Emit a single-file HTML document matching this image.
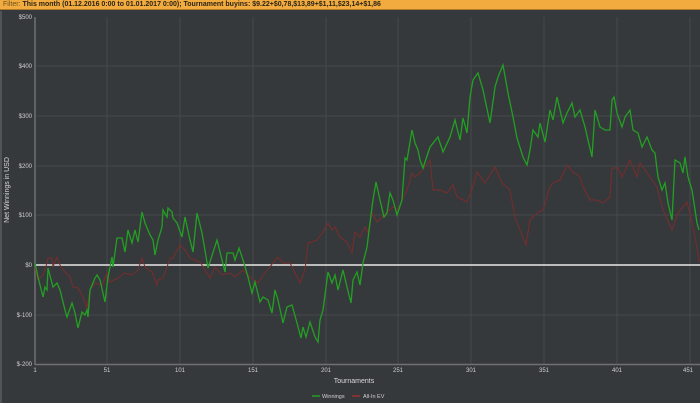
<!DOCTYPE html>
<html><head><style>
html,body{margin:0;padding:0;width:700px;height:403px;overflow:hidden;background:#36393c;font-family:"Liberation Sans",sans-serif}
#hdr{position:absolute;left:0;top:0;width:700px;height:10px;background:#f2ab3f;border-bottom:1px solid #b07a2a;font-size:7px;font-weight:bold;line-height:10px;color:#2a2418;padding-left:3px;box-sizing:border-box;white-space:nowrap}
#hdr span{color:#6a5020;font-weight:normal}
</style></head><body>
<div id="hdr"><span>Filter:</span> This month (01.12.2016 0:00 to 01.01.2017 0:00); Tournament buyins: $9.22+$0,78,$13,89+$1,11,$23,14+$1,86</div>
<svg width="700" height="403" style="position:absolute;left:0;top:0" font-family="Liberation Sans, sans-serif">
<line x1="1" y1="11" x2="1" y2="403" stroke="#5a5d60" stroke-width="1.5"/>
<g stroke="#46494c" stroke-width="1">
<line x1="107" y1="17" x2="107" y2="364"/><line x1="180" y1="17" x2="180" y2="364"/><line x1="253" y1="17" x2="253" y2="364"/><line x1="326" y1="17" x2="326" y2="364"/><line x1="398" y1="17" x2="398" y2="364"/><line x1="471" y1="17" x2="471" y2="364"/><line x1="544" y1="17" x2="544" y2="364"/><line x1="617" y1="17" x2="617" y2="364"/><line x1="690" y1="17" x2="690" y2="364"/>
<line x1="35" y1="66" x2="700" y2="66"/><line x1="35" y1="116" x2="700" y2="116"/><line x1="35" y1="166" x2="700" y2="166"/><line x1="35" y1="215" x2="700" y2="215"/><line x1="35" y1="315" x2="700" y2="315"/>
</g>
<line x1="35" y1="17" x2="35" y2="365" stroke="#6e7174" stroke-width="1.5"/>
<line x1="35" y1="364.5" x2="700" y2="364.5" stroke="#6e7174" stroke-width="1.5"/>
<line x1="35" y1="265" x2="700" y2="265" stroke="#e8e8e8" stroke-width="1.5"/>
<g fill="#d0d0d0" font-size="6" text-anchor="end">
<text x="32" y="19">$500</text><text x="32" y="68">$400</text><text x="32" y="118">$300</text><text x="32" y="168">$200</text><text x="32" y="217">$100</text><text x="32" y="267">$0</text><text x="32" y="317">$-100</text><text x="32" y="366">$-200</text>
</g>
<g fill="#d0d0d0" font-size="6" text-anchor="middle">
<text x="35" y="372">1</text><text x="107" y="372">51</text><text x="180" y="372">101</text><text x="253" y="372">151</text><text x="326" y="372">201</text><text x="398" y="372">251</text><text x="471" y="372">301</text><text x="544" y="372">351</text><text x="617" y="372">401</text><text x="688" y="372">451</text>
</g>
<text x="354" y="383" fill="#d8d8d8" font-size="7" text-anchor="middle">Tournaments</text>
<text transform="translate(9,190) rotate(-90)" fill="#d8d8d8" font-size="7" text-anchor="middle">Net Winnings in USD</text>
<polyline fill="none" stroke="#7a2c2c" stroke-width="1" points="35,267 38,280 43,275 47,263 48,258 52,258 53,267 57,257 60,265 65,272 70,277 73,287 78,288 83,297 87,308 90,290 95,283 102,285 107,273 110,282 118,278 125,273 132,275 138,270 142,258 145,267 152,272 157,285 158,280 163,278 167,267 170,258 173,258 180,245 185,250 190,258 195,260 200,262 205,270 210,278 215,267 222,275 230,273 235,277 243,270 250,277 258,283 267,270 273,263 278,257 283,263 290,263 297,277 300,283 305,270 308,243 312,242 317,240 323,232 328,223 332,230 335,227 340,237 347,242 352,253 355,232 360,237 365,227 368,233 372,213 377,222 382,217 387,212 393,207 398,210 402,200 407,190 412,173 415,177 420,173 430,160 433,190 440,190 447,193 453,185 457,197 467,202 472,190 477,172 485,183 495,167 502,183 510,190 515,217 520,230 526,245 530,220 537,213 543,210 550,187 553,183 560,180 567,165 573,172 580,177 583,187 590,200 597,200 603,203 610,197 612,168 618,168 622,177 630,160 637,177 640,163 650,177 657,187 663,210 672,230 678,213 687,202 692,223 697,247 699,262"/>
<polyline fill="none" stroke="#22a022" stroke-width="1.3" points="35,263 38,277 43,297 45,287 47,290 48,268 53,287 57,283 60,290 65,310 67,317 72,303 75,313 78,328 82,312 85,315 87,310 88,317 90,290 95,278 97,275 100,280 105,302 108,277 112,257 113,267 117,238 122,238 125,252 128,230 132,243 135,230 138,242 142,212 145,223 150,235 153,240 155,255 158,240 162,227 163,210 167,217 168,208 172,212 173,218 177,223 182,237 185,217 190,240 193,252 197,213 202,233 208,268 217,240 222,260 225,272 227,253 233,253 235,260 239,248 243,260 248,277 252,293 255,282 260,302 263,297 268,300 272,313 275,290 278,300 283,323 287,307 292,305 297,323 301,338 303,327 306,337 310,322 315,337 318,342 320,320 323,310 328,272 332,283 335,275 338,290 343,270 347,287 351,303 353,280 357,272 360,285 363,263 367,247 372,207 373,200 376,182 380,200 384,217 387,213 390,193 393,200 397,215 402,200 405,158 407,160 412,130 415,143 418,150 420,160 423,168 430,147 438,137 443,152 450,137 455,120 460,140 463,118 467,133 470,97 473,80 478,73 483,90 490,123 495,87 498,77 503,65 508,93 513,117 517,138 523,157 527,165 530,150 533,130 538,137 540,123 545,142 550,110 553,120 557,97 563,123 567,113 572,103 575,117 580,110 585,127 592,157 595,110 600,127 605,130 610,130 612,100 614,97 617,113 622,127 625,117 630,110 633,130 638,133 642,147 647,137 652,150 655,153 658,177 662,190 665,183 668,203 672,220 675,160 680,163 683,173 685,157 688,177 692,190 697,223 699,230"/>
<line x1="312" y1="396" x2="320" y2="396" stroke="#22a022" stroke-width="1.5"/>
<text x="322" y="398" fill="#d0d0d0" font-size="5.5">Winnings</text>
<line x1="352" y1="396" x2="360" y2="396" stroke="#9a3030" stroke-width="1.5"/>
<text x="363" y="398" fill="#d0d0d0" font-size="5.5">All-In EV</text>
</svg>
</body></html>
